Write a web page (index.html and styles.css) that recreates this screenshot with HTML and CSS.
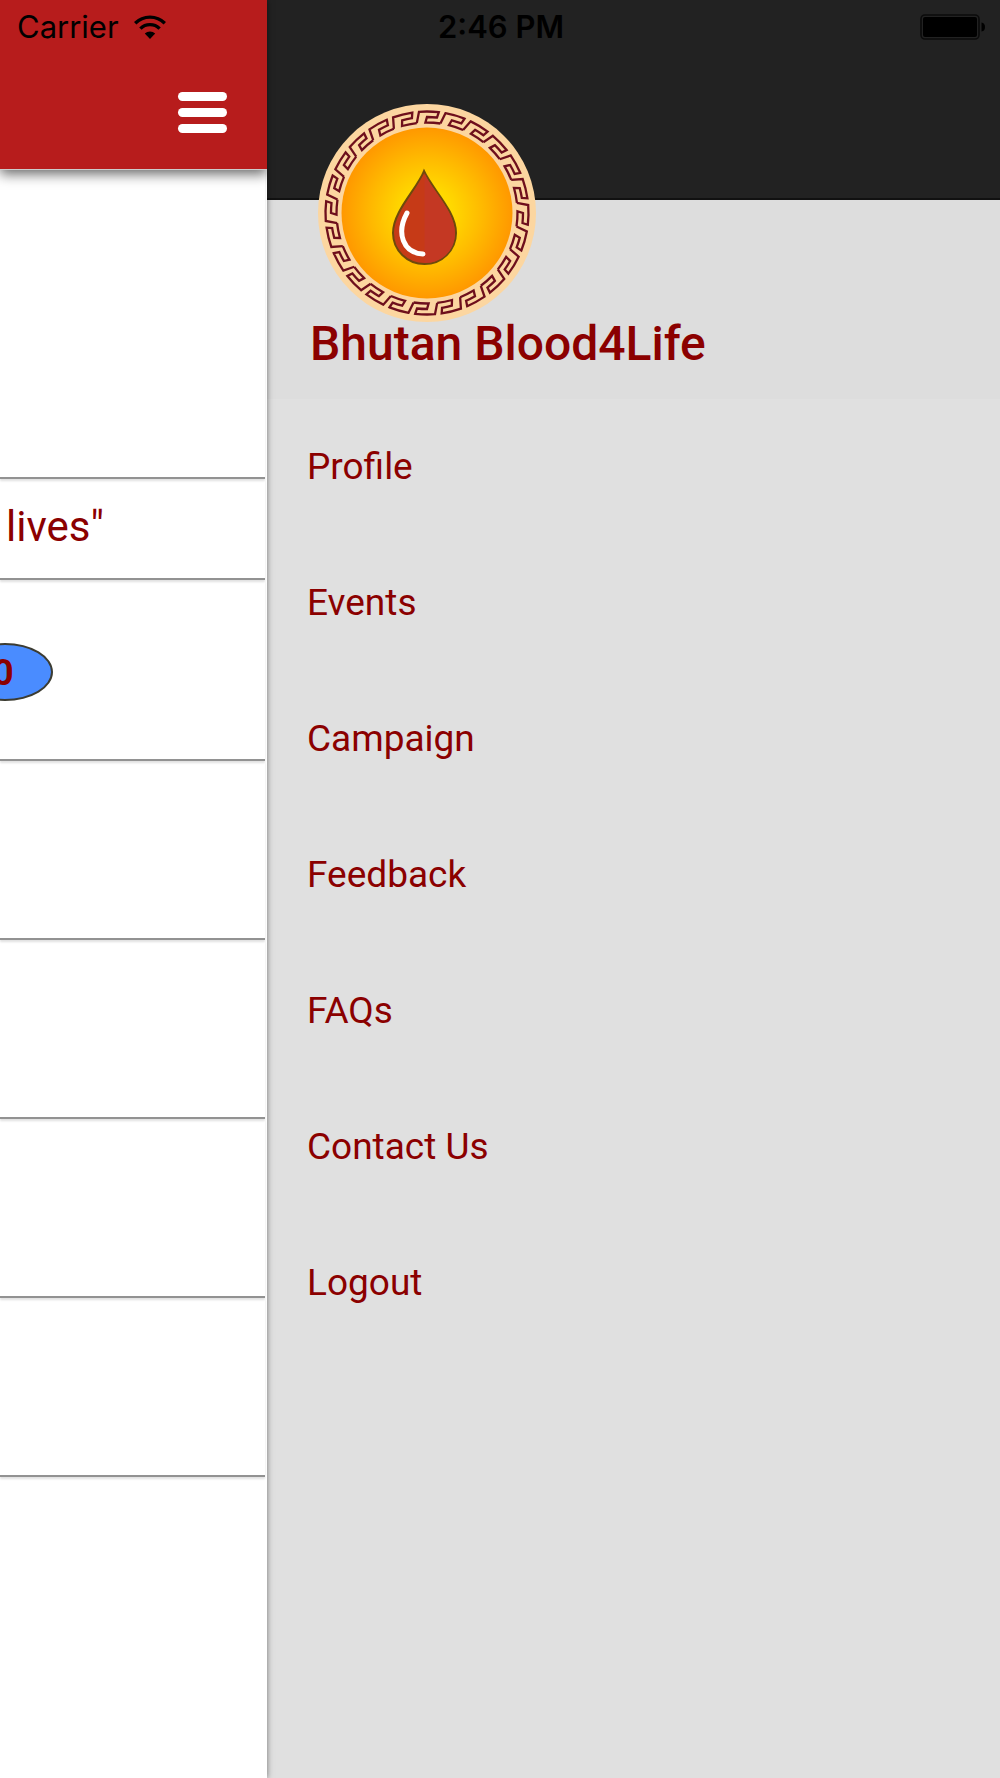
FILE: index.html
```html
<!doctype html>
<html lang="en">
<head>
<meta charset="utf-8" />
<meta name="viewport" content="width=device-width, initial-scale=1" />
<title>Bhutan Blood4Life</title>
<link rel="stylesheet" href="styles.css">
</head>

<body>

<div class="status">
	<div class="carrier">
		<span>Carrier</span>
		<svg class="wifi" viewBox="0 0 32 24" width="32" height="24">
			<g fill="none" stroke="#000" stroke-width="3.4">
				<path d="M1.2 8.2A21 21 0 0 1 30.8 8.2"/>
				<path d="M6.4 13.6A13.6 13.6 0 0 1 25.6 13.6"/>
			</g>
			<path d="M16 24L10.8 18.6A7.6 7.6 0 0 1 21.2 18.6Z"/>
		</svg>
	</div>
	<div class="time">2:46 PM</div>
	<svg class="battery" viewBox="0 0 65 26" width="65" height="26">
		<rect x="1" y="1" width="58" height="24" rx="4" fill="none" stroke="#0b0b0b" stroke-width="1.6"/>
		<rect x="3" y="3" width="54" height="20" rx="2"/>
		<path d="M61.500 8.5Q65 9 65 13T61.500 17.5Z"/>
	</svg>
</div>

<div class="app">

	<main class="page">
		<header class="bar">
			<button class="toggle" type="button" aria-label="Menu"><span></span><span></span><span></span></button>
		</header>
		<section class="row banner"></section>
		<section class="row slogan">lives"</section>
		<section class="row count"><span class="badge">0</span></section>
		<section class="row"></section>
		<section class="row"></section>
		<section class="row"></section>
		<section class="row"></section>
	</main>

	<aside class="drawer">
		<div class="top"></div>
		<div class="brand">
			<svg class="logo" viewBox="-110 -110 220 220" width="220" height="220">
				<defs>
					<radialGradient id="sun">
						<stop offset="0" stop-color="#ffe600"/>
						<stop offset=".3" stop-color="#ffd800"/>
						<stop offset=".65" stop-color="#ffb900"/>
						<stop offset="1" stop-color="#ff9800"/>
					</radialGradient>
					<path id="key" d="M-10.2 -89.9L-8 -101.2A101.5 101.5 0 0 1 11.8 -100.8L10 -95.5A96 96 0 0 0 0 -96L-1.6 -90.5A90.5 90.5 0 0 1 13.4 -89.5"/>
					<g id="quarter">
						<use href="#key"/>
						<use href="#key" transform="rotate(15)"/>
						<use href="#key" transform="rotate(30)"/>
						<use href="#key" transform="rotate(45)"/>
						<use href="#key" transform="rotate(60)"/>
						<use href="#key" transform="rotate(75)"/>
					</g>
				</defs>
				<circle r="109" fill="#fcd6a0"/>
				<g fill="none" stroke="#6e0f1c" stroke-width="2.3">
					<use href="#quarter"/>
					<use href="#quarter" transform="rotate(90)"/>
					<use href="#quarter" transform="rotate(180)"/>
					<use href="#quarter" transform="rotate(270)"/>
				</g>
				<circle r="85.5" fill="url(#sun)"/>
				<path d="M-3 -42C-10 -24 -34 -2 -34 20A31.500 31 0 0 0 29 20C29 -2 5 -24 -3 -42Z" fill="#c63a17" stroke="#6d4a0c" stroke-width="2"/>
				<path d="M-2.500 -40V50C16 50 28 37 28 20C28 -2 4 -24 -2.500 -40Z" fill="#c43823"/>
				<path d="M-20 0C-31 20 -24 40 -4 41" fill="none" stroke="#fff" stroke-width="5" stroke-linecap="round"/>
			</svg>
			<h1>Bhutan Blood4Life</h1>
		</div>
		<nav class="menu">
			<a href="#profile">Profile</a>
			<a href="#events">Events</a>
			<a href="#campaign">Campaign</a>
			<a href="#feedback">Feedback</a>
			<a href="#faqs">FAQs</a>
			<a href="#contact">Contact Us</a>
			<a href="#logout">Logout</a>
		</nav>
	</aside>

</div>

</body>
</html>
```

FILE: styles.css
```css
*{box-sizing:border-box}
body{margin:0;background:#e0e0e0;color:#8b0000;font-family:Roboto,sans-serif;overflow-x:hidden}

/* status bar */
.status{position:absolute;z-index:3;top:0;left:0;right:0;height:54px;padding:0 15px 0 17px;display:grid;grid-template-columns:1fr auto 1fr;align-items:center;color:#000;font:31px/54px Inter,sans-serif}
.carrier{display:flex;align-items:center;gap:15px}
.time{font-weight:600}
.battery{justify-self:end}

.app{display:flex;min-height:100vh}

/* page pushed aside by the drawer */
.page{position:relative;z-index:1;flex:0 0 267px;background:#fff;box-shadow:0 0 6px rgba(0,0,0,.5)}
.bar{height:170px;padding:55px 40px 0 0;display:flex;justify-content:flex-end;align-items:center;background:#b71c1c;border-bottom:1px solid #ccc;box-shadow:0 4px 12px rgba(0,0,0,.6);clip-path:inset(0 0 -20px 0)}
.toggle{display:flex;flex-direction:column;gap:7px;width:49px;padding:0;border:0;background:none;cursor:pointer}
.toggle span{height:9px;border-radius:5px;background:#fff}

.row{height:179px;margin-right:2px;border-bottom:2px solid #929292;box-shadow:0 2px 2px rgba(0,0,0,.12);display:flex;align-items:center}
.banner{height:309px}
.slogan{height:101px;padding:0 0 4px 6px;font-size:42px}
.count{height:181px;padding-top:4px}
.badge{flex:none;width:96px;height:58px;margin-left:-43px;padding-right:4px;border:2px solid #3c3c32;border-radius:50%;background:#4a8cff;font-size:37px;font-weight:700;line-height:56px;text-align:center}

/* drawer */
.drawer{flex:1;background:#e0e0e0}
.top{height:200px;background:#222;border-bottom:2px solid #111}
.brand{position:relative;height:199px;padding:112px 0 0 43px;background:#ddd}
.logo{position:absolute;top:-97px;left:50px}
h1{position:relative;margin:0;font-size:48px;line-height:64px;font-weight:500}
.menu a{display:block;padding-left:40px;color:inherit;font-size:37px;line-height:136px;text-decoration:none}
```
